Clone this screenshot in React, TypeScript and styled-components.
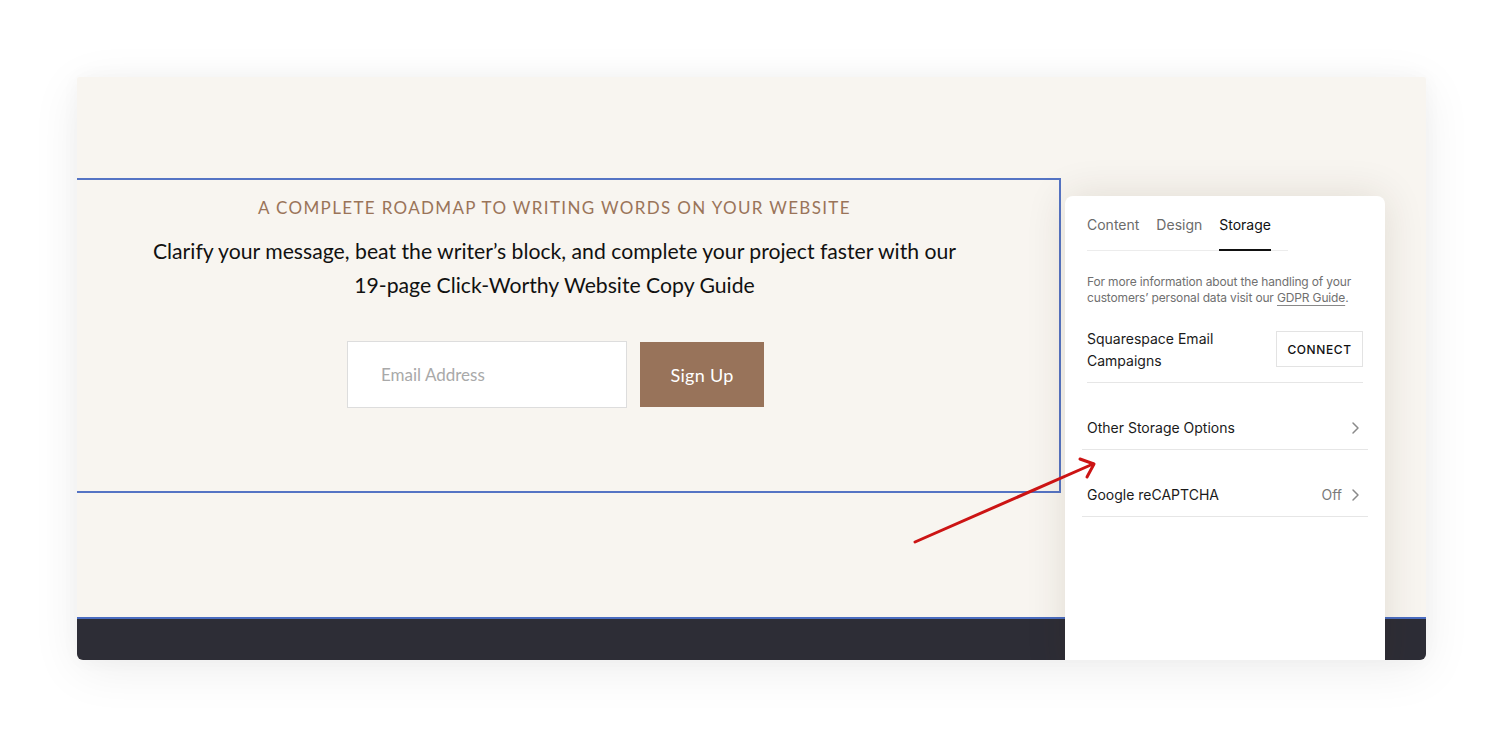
import React from "react";
import styled, { createGlobalStyle } from "styled-components";

const Global = createGlobalStyle`
  html, body { margin: 0; padding: 0; background: #ffffff; }
  body { width: 1503px; height: 737px; overflow: hidden; }
  * { box-sizing: border-box; }
`;

const Page = styled.div`
  padding: 77px 77px 0 77px;
  width: 1503px;
  height: 737px;
  position: relative;
`;

const Frame = styled.div`
  position: relative;
  width: 1349px;
  height: 583px;
  border-radius: 2px 2px 6px 6px;
  overflow: hidden;
  background: #f8f5f0;
  box-shadow: 0 10px 50px rgba(0, 0, 0, 0.07), 0 0 20px rgba(0, 0, 0, 0.03);
  display: flex;
  flex-direction: column;
`;

const Section = styled.section`
  flex: 0 0 542px;
  padding-top: 101px;
  border-bottom: 2px solid #4a6cc0;
`;

const Footer = styled.footer`
  flex: 1;
  background: #2d2d36;
`;

const SelectBox = styled.div`
  width: 984px;
  height: 315px;
  border: 2px solid #5574c4;
  border-left: none;
  display: flex;
  flex-direction: column;
  align-items: center;
  padding-right: 27px;
  padding-top: 17px;
`;

const Eyebrow = styled.div`
  font-family: "Lato", sans-serif;
  font-size: 17px;
  letter-spacing: 1.35px;
  color: #9a7459;
  line-height: 22px;
  text-transform: uppercase;
`;

const Lead = styled.p`
  margin: 15px 0 0 0;
  font-family: "Lato", sans-serif;
  font-size: 21.2px;
  line-height: 34px;
  color: #111;
  text-align: center;
  width: 840px;
`;

const Form = styled.div`
  display: flex;
  align-items: center;
  gap: 13px;
  margin-top: 39px;
  padding-left: 2px;
`;

const EmailInput = styled.div`
  width: 280px;
  height: 67px;
  background: #fff;
  border: 1px solid #dddddd;
  display: flex;
  align-items: center;
  padding-left: 33px;
  font-family: "Lato", sans-serif;
  font-size: 17px;
  color: #a9a9a9;
`;

const SignUp = styled.div`
  width: 124px;
  height: 65px;
  background: #98735a;
  color: #fff;
  display: flex;
  align-items: center;
  justify-content: center;
  font-family: "Lato", sans-serif;
  font-size: 18px;
  letter-spacing: 0.3px;
`;

const Panel = styled.aside`
  position: absolute;
  left: 988px;
  top: 119px;
  width: 320px;
  height: 480px;
  background: #fff;
  border-radius: 8px 8px 0 0;
  box-shadow: 0 0 40px rgba(60, 40, 20, 0.12);
  padding: 20px 0 0 0;
  font-family: "Inter", "Liberation Sans", sans-serif;
`;

const Tabs = styled.div`
  margin: 0 97px 0 22px;
  display: flex;
  gap: 17px;
  border-bottom: 1px solid #ececec;
`;

const Tab = styled.div<{ $active?: boolean }>`
  font-size: 14px;
  line-height: 17px;
  padding-bottom: 16px;
  color: ${(p) => (p.$active ? "#111" : "#6b6b6b")};
  border-bottom: 2px solid ${(p) => (p.$active ? "#111" : "transparent")};
  margin-bottom: -1px;
`;

const Info = styled.p`
  margin: 23px 22px 0 22px;
  font-size: 12px;
  line-height: 16px;
  color: #707070;
  letter-spacing: -0.15px;
`;

const Link = styled.span`
  text-decoration: underline;
  text-underline-offset: 3px;
  text-decoration-color: #888;
`;

const ConnectRow = styled.div`
  margin: 22px 22px 0 22px;
  padding-bottom: 10px;
  border-bottom: 1px solid #e6e6e6;
  display: flex;
  justify-content: space-between;
  align-items: flex-start;
`;

const RowLabel = styled.div`
  font-size: 14px;
  line-height: 22px;
  color: #1a1a1a;
`;

const ConnectButton = styled.div`
  width: 87px;
  height: 36px;
  margin-top: 3px;
  border: 1px solid #e3e3e3;
  display: flex;
  align-items: center;
  justify-content: center;
  font-size: 12px;
  letter-spacing: 0.6px;
  color: #111;
  font-weight: 500;
`;

const NavRow = styled.div`
  margin: 0 17px;
  padding: 23px 8px 0 5px;
  height: 67px;
  border-bottom: 1px solid #e6e6e6;
  display: flex;
  align-items: center;
  justify-content: space-between;
`;

const NavRight = styled.div`
  display: flex;
  align-items: center;
  gap: 8px;
  font-size: 14px;
  color: #7a7a7a;
`;

const Arrow = styled.svg`
  position: absolute;
  left: 0;
  top: 0;
  pointer-events: none;
`;

const Chevron = () => (
  <svg width="10" height="14" viewBox="0 0 10 14">
    <path d="M3 2l5 5-5 5" fill="none" stroke="#8a8a8a" strokeWidth="1.5" strokeLinecap="round" strokeLinejoin="round" />
  </svg>
);

export default function App() {
  return (
    <>
      <Global />
      <Page>
        <Frame>
          <Section>
            <SelectBox>
              <Eyebrow>A Complete Roadmap to Writing Words on Your Website</Eyebrow>
              <Lead>
                Clarify your message, beat the writer’s block, and complete your project faster with our
                19-page Click-Worthy Website Copy Guide
              </Lead>
              <Form>
                <EmailInput>Email Address</EmailInput>
                <SignUp>Sign Up</SignUp>
              </Form>
            </SelectBox>
          </Section>
          <Footer />
          <Panel>
            <Tabs>
              <Tab>Content</Tab>
              <Tab>Design</Tab>
              <Tab $active>Storage</Tab>
            </Tabs>
            <Info>
              For more information about the handling of your customers’ personal data visit our{" "}
              <Link>GDPR Guide</Link>.
            </Info>
            <ConnectRow>
              <RowLabel>
                Squarespace Email
                <br />
                Campaigns
              </RowLabel>
              <ConnectButton>CONNECT</ConnectButton>
            </ConnectRow>
            <NavRow>
              <RowLabel>Other Storage Options</RowLabel>
              <NavRight>
                <Chevron />
              </NavRight>
            </NavRow>
            <NavRow>
              <RowLabel>Google reCAPTCHA</RowLabel>
              <NavRight>
                Off
                <Chevron />
              </NavRight>
            </NavRow>
          </Panel>
        </Frame>
        <Arrow width="1503" height="737" viewBox="0 0 1503 737">
          <path d="M915 542 L1093 464" stroke="#cc1414" strokeWidth="3" fill="none" strokeLinecap="round" />
          <path d="M1080 459 L1094 464 L1087 477" stroke="#cc1414" strokeWidth="3" fill="none" strokeLinecap="round" strokeLinejoin="round" />
        </Arrow>
      </Page>
    </>
  );
}
